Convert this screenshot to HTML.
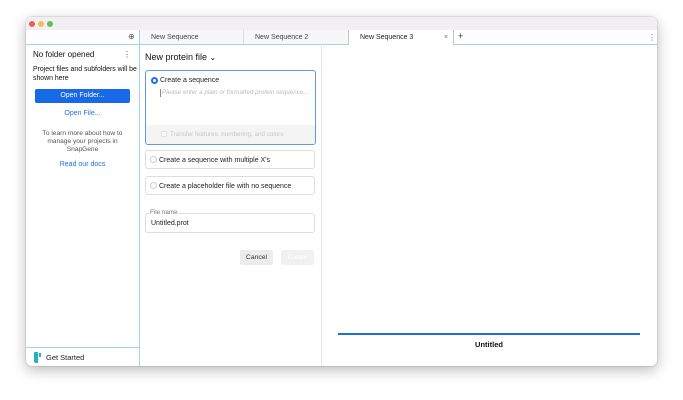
<!DOCTYPE html>
<html><head><meta charset="utf-8"><style>
*{box-sizing:border-box;margin:0;padding:0}
body{width:683px;height:400px;background:#fff;font-family:"Liberation Sans",sans-serif;position:relative;overflow:hidden;color:#222}
.a{position:absolute}
#win{left:26px;top:17px;width:631px;height:349px;border-radius:6px;background:#fff;box-shadow:0 4px 14px rgba(0,0,0,.28),0 0 0 1px rgba(0,0,0,.08);overflow:hidden}
.dot{width:6px;height:6px;border-radius:50%;top:4px}
.t{font-size:7px;color:#444;line-height:8px}
.rad{width:7px;height:7px;border-radius:50%;border:1px solid #ccc;background:#fff}
.box{border:1px solid #ddd;border-radius:3px;background:#fff}
</style></head><body>
<div id="win" class="a">
 <div class="a" style="left:0;top:0;width:631px;height:13px;background:#f1eff2"></div>
 <div class="a dot" style="left:3px;background:#ec5f57"></div>
 <div class="a dot" style="left:12px;background:#f3be4f"></div>
 <div class="a dot" style="left:21px;background:#5ec453"></div>
 <div class="a" style="left:0;top:13px;width:631px;height:14px;background:#f7f7f8"></div>
 <div class="a" style="left:0;top:13px;width:113px;height:14px;background:#fff"></div>
 <div class="a" style="left:102px;top:15px;font-size:8px;color:#555;line-height:9px">⊕</div>
 <div class="a t" style="left:125px;top:17px">New Sequence</div>
 <div class="a" style="left:217px;top:13px;width:1px;height:14px;background:#ddd"></div>
 <div class="a t" style="left:229px;top:17px">New Sequence 2</div>
 <div class="a" style="left:322px;top:13px;width:1px;height:14px;background:#9ed8de"></div>
 <div class="a" style="left:323px;top:13px;width:104px;height:15px;background:#fff"></div>
 <div class="a t" style="left:334px;top:17px;color:#222">New Sequence 3</div>
 <div class="a" style="left:418px;top:16px;font-size:7px;color:#666;line-height:9px">×</div>
 <div class="a" style="left:427px;top:13px;width:1px;height:14px;background:#9ed8de"></div>
 <div class="a" style="left:428px;top:13px;width:203px;height:14px;background:#fff"></div>
 <div class="a" style="left:432px;top:15px;font-size:9px;color:#333;line-height:9px">+</div>
 <div class="a" style="left:622px;top:16px;font-size:8px;color:#555;line-height:9px">⋮</div>
 <div class="a" style="left:113px;top:27px;width:210px;height:1px;background:#9ed8de"></div>
 <div class="a" style="left:0;top:27px;width:113px;height:1px;background:#9ed8de"></div>
 <div class="a" style="left:427px;top:27px;width:204px;height:1px;background:#9ed8de"></div>
 <div class="a" style="left:113px;top:13px;width:1px;height:336px;background:#9ed8de"></div>
 <div class="a" style="left:7px;top:33px;font-size:8px;color:#111;line-height:9px">No folder opened</div>
 <div class="a" style="left:97px;top:33px;font-size:8px;color:#444;line-height:9px">⋮</div>
 <div class="a" style="left:7px;top:49px;width:106px;font-size:6.9px;line-height:8.5px;color:#111">Project files and subfolders will be shown here</div>
 <div class="a" style="left:9px;top:72px;width:95px;height:14px;background:#1769e8;border-radius:2px;color:#fff;font-size:7px;text-align:center;line-height:14px">Open Folder...</div>
 <div class="a" style="left:0;top:93px;width:113px;text-align:center;font-size:7px;color:#1a73e8">Open File...</div>
 <div class="a" style="left:14px;top:113px;width:85px;text-align:center;font-size:6.6px;line-height:8px;color:#555">To learn more about how to manage your projects in SnapGene</div>
 <div class="a" style="left:0;top:144px;width:113px;text-align:center;font-size:7px;color:#1a73e8">Read our docs</div>
 <div class="a" style="left:0;top:330px;width:113px;height:1px;background:#9ed8de"></div>
 <div class="a" style="left:8px;top:335px;width:4px;height:11px;background:#20b3bf;border-radius:1px 1px 0 2px"></div>
 <div class="a" style="left:13px;top:336px;width:2px;height:4px;background:#20b3bf"></div>
 <div class="a" style="left:20px;top:336px;font-size:7.5px;color:#222;line-height:9px">Get Started</div>
 <div class="a" style="left:295px;top:27px;width:1px;height:322px;background:#e5e5e5"></div>
 <div class="a" style="left:119px;top:35px;font-size:9px;color:#111;line-height:11px">New protein file <span style="font-size:8px">⌄</span></div>
 <div class="a" style="left:119px;top:53px;width:171px;height:75px;border:1.5px solid #5b9be6;border-radius:3px;background:#fff;overflow:hidden">
  <div class="a" style="left:5px;top:6px;width:7px;height:7px;border-radius:50%;border:2px solid #1a73e8;background:#fff"></div>
  <div class="a t" style="left:14px;top:6px;color:#222">Create a sequence</div>
  <div class="a" style="left:14px;top:18px;width:1px;height:8px;background:#888"></div>
  <div class="a" style="left:16px;top:18px;font-size:6.3px;font-style:italic;color:#bbb;line-height:8px">Please enter a plain or formatted protein sequence...</div>
  <div class="a" style="left:0;top:54px;width:171px;height:21px;background:#f4f4f4"></div>
  <div class="a" style="left:15px;top:60px;width:6px;height:6px;border:1px solid #e2e2e2;border-radius:1px;background:#f8f8f8"></div>
  <div class="a" style="left:24px;top:60px;font-size:6.3px;color:#c6c6c6;line-height:8px">Transfer features, numbering, and colors</div>
 </div>
 <div class="a box" style="left:119px;top:133px;width:170px;height:19px"></div>
 <div class="a rad" style="left:124px;top:139px"></div>
 <div class="a t" style="left:133px;top:140px;color:#222">Create a sequence with multiple X's</div>
 <div class="a box" style="left:119px;top:159px;width:170px;height:19px"></div>
 <div class="a rad" style="left:124px;top:165px"></div>
 <div class="a t" style="left:133px;top:166px;color:#222">Create a placeholder file with no sequence</div>
 <div class="a box" style="left:119px;top:196px;width:170px;height:20px"></div>
 <div class="a" style="left:123px;top:192px;background:#fff;padding:0 1px;font-size:6.3px;color:#777;line-height:7px">File name</div>
 <div class="a t" style="left:125px;top:203px;color:#222">Untitled.prot</div>
 <div class="a" style="left:214px;top:233px;width:33px;height:15px;background:#ececec;border-radius:2px;font-size:6.8px;text-align:center;line-height:15px;color:#333">Cancel</div>
 <div class="a" style="left:255px;top:233px;width:33px;height:15px;background:#f1f1f1;border-radius:2px;font-size:6.5px;text-align:center;line-height:15px;color:#fff">Create</div>
 <div class="a" style="left:312px;top:316px;width:302px;height:2px;background:#1f6fd6"></div>
 <div class="a" style="left:312px;top:323px;width:302px;text-align:center;font-size:7.5px;font-weight:bold;color:#111">Untitled</div>
</div>
</body></html>
